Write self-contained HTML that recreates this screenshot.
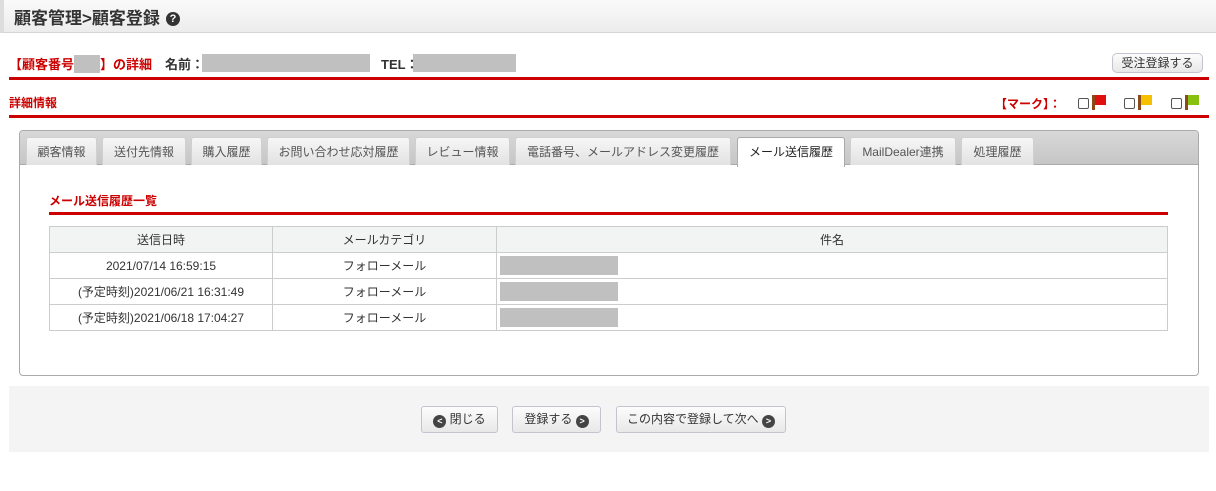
<!DOCTYPE html>
<html><head><meta charset="utf-8"><style>
*{box-sizing:border-box;margin:0;padding:0}
body{width:1216px;height:491px;background:#fff;font-family:"Liberation Sans","Noto Sans CJK JP",sans-serif;font-size:12px;color:#333;position:relative;overflow:hidden}
.abs{position:absolute}
.hdr{left:0;top:0;width:1216px;height:33px;background:linear-gradient(#fafafa,#ececec);border-bottom:1px solid #d6d6d6;border-left:4px solid #ddd}
.hdr h1{position:absolute;left:10px;top:4px;font-size:17px;font-weight:bold;color:#333}
.q{display:inline-block;width:14px;height:14px;border-radius:50%;background:#333;color:#fff;font-size:11px;text-align:center;line-height:14px;vertical-align:2px;margin-left:6px}
.red{color:#c00}
.rl{height:3px;background:#c00}
.gray{background:#c0c0c0}
.btn{border:1px solid #c4c4d0;border-radius:3px;background:linear-gradient(#fcfcfc,#e8e8e8);font-size:12px;color:#333;text-align:center}
.tab{top:137px;height:28px;background:linear-gradient(#f6f6f6,#e2e2e2);border:1px solid #d0d0d0;border-bottom:none;border-radius:3px 3px 0 0;text-align:center;line-height:28px;font-size:12px;color:#555}
table{border-collapse:collapse;position:absolute;left:49px;top:226px;width:1119px}
td,th{border:1px solid #ccc;height:26px;font-weight:normal;font-size:12px;text-align:center;color:#333}
th{background:#f2f4f3}
.ci{display:inline-block;width:13px;height:13px;border-radius:50%;background:#444;color:#fff;font-size:9px;line-height:13px;vertical-align:-1px;font-weight:bold}
.cb{display:inline-block;width:11px;height:11px;border:1px solid #555;border-radius:2px;background:#fff;vertical-align:-1px}
.fl{display:inline-block;width:3px;height:15px;background:#8b4a1a;vertical-align:-2px;position:relative}
.fl i{position:absolute;left:3px;top:0;width:11px;height:10px}
</style></head><body>
<div class="abs hdr"><h1>顧客管理&gt;顧客登録<span class="q">?</span></h1></div>
<div class="abs" style="left:9px;top:54px;font-size:13px;font-weight:bold"><span class="red">【顧客番号<span class="gray" style="display:inline-block;width:26px;height:18px;vertical-align:-4px"></span>】の詳細</span>　名前：</div>
<div class="abs gray" style="left:202px;top:54px;width:168px;height:18px"></div>
<div class="abs" style="left:381px;top:54px;font-size:13px;font-weight:bold">TEL：</div>
<div class="abs gray" style="left:413px;top:54px;width:103px;height:18px"></div>
<div class="abs btn" style="left:1112px;top:53px;width:91px;height:20px;line-height:18px;border-radius:5px">受注登録する</div>
<div class="abs rl" style="left:9px;top:77px;width:1200px"></div>
<div class="abs red" style="left:9px;top:94px;font-size:12px;font-weight:bold">詳細情報</div>
<div class="abs red" style="left:995px;top:95px;font-size:12px;font-weight:bold">【マーク】：</div>
<div class="abs" style="left:1078px;top:95px"><span class="cb"></span> <span class="fl"><i style="background:#e01010"></i></span></div>
<div class="abs" style="left:1124px;top:95px"><span class="cb"></span> <span class="fl"><i style="background:#f4c000"></i></span></div>
<div class="abs" style="left:1171px;top:95px"><span class="cb"></span> <span class="fl"><i style="background:#88c010"></i></span></div>
<div class="abs rl" style="left:9px;top:115px;width:1200px"></div>

<div class="abs" style="left:19px;top:130px;width:1180px;height:246px;border:1px solid #aaa;border-radius:4px"></div>
<div class="abs" style="left:20px;top:131px;width:1178px;height:34px;background:linear-gradient(#d8d8d8,#c6c6c6);border-bottom:1px solid #aaa;border-radius:3px 3px 0 0"></div>
<div class="abs tab" style="left:26px;width:71px">顧客情報</div>
<div class="abs tab" style="left:102px;width:84px">送付先情報</div>
<div class="abs tab" style="left:191px;width:71px">購入履歴</div>
<div class="abs tab" style="left:267px;width:143px">お問い合わせ応対履歴</div>
<div class="abs tab" style="left:415px;width:95px">レビュー情報</div>
<div class="abs tab" style="left:515px;width:216px">電話番号、メールアドレス変更履歴</div>
<div class="abs tab" style="left:737px;width:108px;background:#fff;height:30px;color:#222;border-color:#aaa">メール送信履歴</div>
<div class="abs tab" style="left:850px;width:106px">MailDealer連携</div>
<div class="abs tab" style="left:961px;width:73px">処理履歴</div>

<div class="abs red" style="left:49px;top:192px;font-weight:bold;font-size:12px">メール送信履歴一覧</div>
<div class="abs rl" style="left:49px;top:212px;width:1119px"></div>
<table>
<tr><th style="width:223px">送信日時</th><th style="width:224px">メールカテゴリ</th><th>件名</th></tr>
<tr><td>2021/07/14 16:59:15</td><td>フォローメール</td><td style="text-align:left;padding-left:3px"><div class="gray" style="width:118px;height:19px"></div></td></tr>
<tr><td>(予定時刻)2021/06/21 16:31:49</td><td>フォローメール</td><td style="text-align:left;padding-left:3px"><div class="gray" style="width:118px;height:19px"></div></td></tr>
<tr><td>(予定時刻)2021/06/18 17:04:27</td><td>フォローメール</td><td style="text-align:left;padding-left:3px"><div class="gray" style="width:118px;height:19px"></div></td></tr>
</table>

<div class="abs" style="left:9px;top:386px;width:1200px;height:66px;background:#f4f4f4"></div>
<div class="abs btn" style="left:421px;top:406px;width:77px;height:27px;line-height:25px"><span class="ci">&lt;</span> 閉じる</div>
<div class="abs btn" style="left:512px;top:406px;width:89px;height:27px;line-height:25px">登録する <span class="ci">&gt;</span></div>
<div class="abs btn" style="left:616px;top:406px;width:170px;height:27px;line-height:25px">この内容で登録して次へ <span class="ci">&gt;</span></div>
</body></html>
